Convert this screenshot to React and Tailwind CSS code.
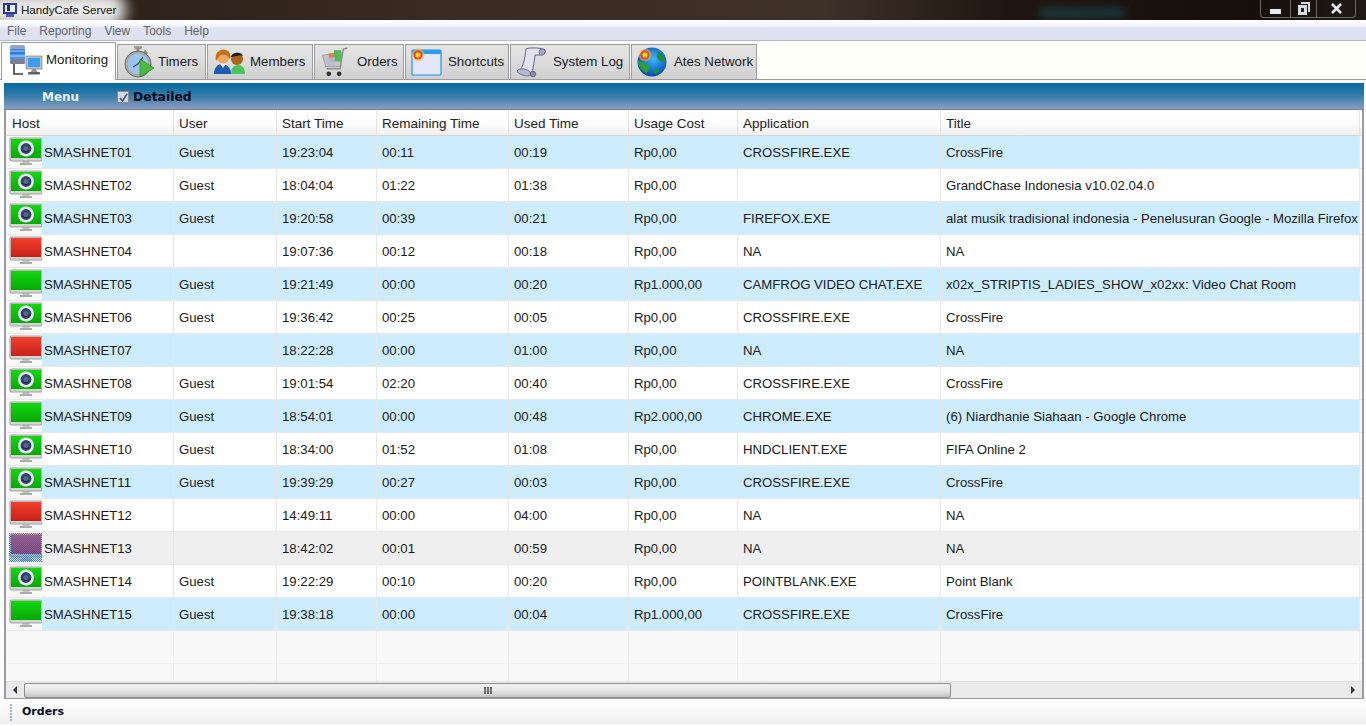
import { useId } from "react";

const rows = [
  ["SMASHNET01", "Guest", "19:23:04", "00:11", "00:19", "Rp0,00", "CROSSFIRE.EXE", "CrossFire", "cam"],
  ["SMASHNET02", "Guest", "18:04:04", "01:22", "01:38", "Rp0,00", "", "GrandChase Indonesia v10.02.04.0", "cam"],
  ["SMASHNET03", "Guest", "19:20:58", "00:39", "00:21", "Rp0,00", "FIREFOX.EXE", "alat musik tradisional indonesia - Penelusuran Google - Mozilla Firefox", "cam"],
  ["SMASHNET04", "", "19:07:36", "00:12", "00:18", "Rp0,00", "NA", "NA", "red"],
  ["SMASHNET05", "Guest", "19:21:49", "00:00", "00:20", "Rp1.000,00", "CAMFROG VIDEO CHAT.EXE", "x02x_STRIPTIS_LADIES_SHOW_x02xx: Video Chat Room", "green"],
  ["SMASHNET06", "Guest", "19:36:42", "00:25", "00:05", "Rp0,00", "CROSSFIRE.EXE", "CrossFire", "cam"],
  ["SMASHNET07", "", "18:22:28", "00:00", "01:00", "Rp0,00", "NA", "NA", "red"],
  ["SMASHNET08", "Guest", "19:01:54", "02:20", "00:40", "Rp0,00", "CROSSFIRE.EXE", "CrossFire", "cam"],
  ["SMASHNET09", "Guest", "18:54:01", "00:00", "00:48", "Rp2.000,00", "CHROME.EXE", "(6) Niardhanie Siahaan - Google Chrome", "green"],
  ["SMASHNET10", "Guest", "18:34:00", "01:52", "01:08", "Rp0,00", "HNDCLIENT.EXE", "FIFA Online 2", "cam"],
  ["SMASHNET11", "Guest", "19:39:29", "00:27", "00:03", "Rp0,00", "CROSSFIRE.EXE", "CrossFire", "cam"],
  ["SMASHNET12", "", "14:49:11", "00:00", "04:00", "Rp0,00", "NA", "NA", "red"],
  ["SMASHNET13", "", "18:42:02", "00:01", "00:59", "Rp0,00", "NA", "NA", "selected"],
  ["SMASHNET14", "Guest", "19:22:29", "00:10", "00:20", "Rp0,00", "POINTBLANK.EXE", "Point Blank", "cam"],
  ["SMASHNET15", "Guest", "19:38:18", "00:00", "00:04", "Rp1.000,00", "CROSSFIRE.EXE", "CrossFire", "green"],
];

const headers = ["Host", "User", "Start Time", "Remaining Time", "Used Time", "Usage Cost", "Application", "Title"];
const gridCols = "grid grid-cols-[167px_103px_100px_132px_120px_109px_203px_419px]";

function PcIcon({ state }) {
  const id = useId();
  const isRed = state === "red" || state === "selected";
  return (
    <svg width="34" height="30" viewBox="0 0 34 30" className="shrink-0">
      <defs>
        <linearGradient id={id} x1="0" y1="0" x2="0" y2="1">
          <stop offset="0" stopColor={isRed ? "#f2402c" : "#12d80f"} />
          <stop offset="1" stopColor={isRed ? "#c8201a" : "#07a808"} />
        </linearGradient>
        <pattern id={id + "d"} width="2" height="2" patternUnits="userSpaceOnUse">
          <rect width="1" height="1" fill="#2f7cf0" />
          <rect x="1" y="1" width="1" height="1" fill="#2f7cf0" />
        </pattern>
      </defs>
      <path d="M14 23h6l1 4h-8z" fill="#c4c8c4" />
      <rect x="11" y="26" width="12" height="2" fill="#a9aca9" />
      <rect x="1" y="1" width="32" height="23" rx="1" fill="#d2d6d2" stroke="#8d918d" strokeWidth="0.8" />
      <rect x="2" y="2" width="30" height="19" fill={`url(#${id})`} />
      {state === "cam" && (
        <g>
          <circle cx="17" cy="11.5" r="8" fill="#e9edf2" />
          <circle cx="17" cy="11.5" r="5.4" fill="#34406e" />
          <circle cx="17" cy="11.5" r="2.6" fill="#56648f" />
          <path d="M13.5 13.5q3.5 2.5 7 0" stroke="#1c2444" strokeWidth="1" fill="none" />
        </g>
      )}
      {state === "selected" && <rect x="0" y="0" width="34" height="29" fill={`url(#${id}d)`} />}
    </svg>
  );
}

function MonitoringIcon() {
  return (
    <svg width="34" height="32" viewBox="0 0 34 32">
      <path d="M5 18v12h9" stroke="#3c3c38" strokeWidth="1.6" fill="none" />
      <rect x="1" y="1" width="15" height="5" rx="2" fill="#9aa2c4" />
      <rect x="1" y="5" width="15" height="5" fill="#2c7fe0" />
      <rect x="1" y="10" width="15" height="5" fill="#4a95e8" />
      <rect x="1" y="15" width="15" height="5" rx="1" fill="#7b8198" />
      <path d="M1 7h15M1 12h15" stroke="#cfe3fa" strokeWidth="0.8" />
      <rect x="17" y="12" width="16" height="13" fill="#b8bec4" stroke="#7c8288" strokeWidth="0.7" />
      <rect x="19" y="14" width="12" height="9" fill="#3c9cf0" />
      <path d="M23 25h4l1 3h-6z" fill="#8c9298" />
      <rect x="19" y="28" width="12" height="2.5" rx="1" fill="#5c6268" />
    </svg>
  );
}

function TimerIcon() {
  return (
    <svg width="30" height="32" viewBox="0 0 30 32">
      <rect x="10" y="0" width="8" height="3" rx="1" fill="#9a9a96" />
      <rect x="12.5" y="2" width="3" height="4" fill="#8a8a86" />
      <path d="M21 4l3 3-2 2-3-3z" fill="#8a8a86" />
      <circle cx="14" cy="18" r="13" fill="#a8a8a2" stroke="#6c6c68" strokeWidth="1" />
      <circle cx="14" cy="18" r="10.5" fill="#9cc4ec" />
      <path d="M14 18l5-7M14 18l-5 3" stroke="#2c4a78" strokeWidth="1.2" />
      <path d="M16 13v18l14-9z" fill="#4cb83c" stroke="#2f8a28" strokeWidth="0.7" />
    </svg>
  );
}

function MembersIcon() {
  return (
    <svg width="32" height="26" viewBox="0 0 32 26">
      <path d="M18 25c0-6 3-9 7-9s7 3 7 9z" fill="#4cc45c" />
      <circle cx="24" cy="10" r="6" fill="#a86418" />
      <path d="M18 8c1-5 10-6 12-1-3-1-7 0-12 1z" fill="#141414" />
      <path d="M1 25c0-7 4-10 8-10s9 3 9 10z" fill="#1c5cb4" />
      <path d="M7 15l3 4 3-4z" fill="#e8f0f8" />
      <circle cx="10" cy="8" r="6.5" fill="#f0a860" />
      <path d="M3 12C1 3 8-1 13 1c5 2 5 7 4 9-2-4-5-5-9-4-2 1-3 3-5 6z" fill="#c4701c" />
    </svg>
  );
}

function CartIcon() {
  return (
    <svg width="30" height="33" viewBox="0 0 26 32">
      <path d="M25 2l-4 1-3 19H5" stroke="#8e8e8e" strokeWidth="1.4" fill="none" />
      <path d="M1 9l19-3-2 14H4z" fill="#c6c8cc" stroke="#85878a" strokeWidth="0.7" />
      <rect x="7" y="7" width="6" height="8" fill="#e87c48" />
      <rect x="12" y="4" width="7" height="11" fill="#58b858" />
      <rect x="5" y="11" width="8" height="8" fill="#b4bcd4" opacity="0.8" />
      <circle cx="7" cy="27" r="2.3" fill="#333" />
      <circle cx="17" cy="27" r="2.3" fill="#333" />
    </svg>
  );
}

function Spark() {
  return (
    <g>
      <circle cx="7" cy="7" r="6.5" fill="#f8b060" opacity="0.55" />
      <circle cx="7" cy="7" r="4.5" fill="#e84c1c" />
      <circle cx="7" cy="7" r="2.5" fill="#ffd820" />
    </g>
  );
}

function ShortcutsIcon() {
  return (
    <svg width="32" height="28" viewBox="0 0 32 28">
      <rect x="1" y="2" width="29" height="25" rx="1" fill="#e4e6fa" stroke="#1c98f0" strokeWidth="1.2" />
      <rect x="1" y="2" width="29" height="4" fill="#2c9cf0" />
      <Spark />
    </svg>
  );
}

function ScrollIcon() {
  return (
    <svg width="32" height="32" viewBox="0 0 32 32">
      <path d="M10 3c4-2 17-1 19 1 1 2-1 4-3 5l-7 0c-1 8-2 15-4 19-6 0-11-1-12-2 4-5 6-14 7-23z" fill="#e2e2f0" stroke="#64648c" strokeWidth="1" />
      <circle cx="26" cy="6" r="3" fill="#a8a8c4" stroke="#64648c" strokeWidth="0.8" />
      <path d="M1 25c2-3 9-3 13 1 1 2 0 4-2 4-4 0-10-2-11-5z" fill="#b8b8d0" stroke="#64648c" strokeWidth="0.9" />
      <circle cx="17" cy="28" r="2.8" fill="#8c8cac" stroke="#585880" strokeWidth="0.8" />
    </svg>
  );
}

function GlobeIcon() {
  const id = useId();
  return (
    <svg width="30" height="30" viewBox="0 0 30 30">
      <defs>
        <radialGradient id={id} cx="0.55" cy="0.4" r="0.65">
          <stop offset="0" stopColor="#3cb8f0" />
          <stop offset="0.75" stopColor="#1060c0" />
          <stop offset="1" stopColor="#0c3c8c" />
        </radialGradient>
      </defs>
      <circle cx="15" cy="15" r="14.5" fill={`url(#${id})`} />
      <path d="M1 14c4 1 7 1 10 4 2 2 1 5-1 8C5 24 1 20 1 14z" fill="#2c9c3c" />
      <path d="M22 5c3 1 6 5 6 9-2 2-3 1-5 0s-3-3-3-5 1-3 2-4z" fill="#1c8c48" />
      <path d="M17 23c2-1 4-1 5 0s-1 3-3 4c-2 0-3-3-2-4z" fill="#1c8c48" />
      <g transform="translate(1 1)">
        <Spark />
      </g>
    </svg>
  );
}

const tabs = [
  ["Timers", <TimerIcon />, "w-[89px] pl-[6px] gap-[4px]"],
  ["Members", <MembersIcon />, "w-[106px] pl-[5px] gap-[5px]"],
  ["Orders", <CartIcon />, "w-[90px] pl-[5px] gap-[7px]"],
  ["Shortcuts", <ShortcutsIcon />, "w-[104px] pl-[5px] gap-[5px]"],
  ["System Log", <ScrollIcon />, "w-[120px] pl-[5px] gap-[5px]"],
  ["Ates Network", <GlobeIcon />, "w-[126px] pl-[5px] gap-[7px]"],
];

function TitleBar() {
  return (
    <div className="relative h-[20px] flex items-center justify-between bg-[linear-gradient(90deg,#2a1e17_0%,#3a2c22_35%,#3e3128_60%,#201611_74%,#150e0b_92%,#201a17_100%)] overflow-hidden">
      <div className="absolute left-[-14px] top-[-8px] w-[140px] h-[36px] rounded-full bg-white/90 blur-[7px]" />
      <div className="absolute left-[1040px] top-[8px] w-[85px] h-[10px] bg-[#1c5e6c]/50 blur-[4px]" />
      <div className="relative flex items-center gap-[3px] pl-[2px]">
        <svg width="16" height="16" viewBox="0 0 16 16">
          <rect x="1" y="1" width="14" height="11" fill="#2c3c9c" />
          <rect x="3" y="3" width="10" height="7" fill="#e8f0fc" />
          <rect x="5" y="3" width="3" height="6" fill="#1c2c7c" />
          <rect x="4" y="12" width="8" height="3" fill="#4c5cac" />
        </svg>
        <span className="text-[11.6px] leading-none text-[#111]">HandyCafe Server</span>
      </div>
      <div className="relative mr-[10px] flex h-[18px] self-start border border-t-0 border-[#6e6a66] rounded-b-[4px] text-white">
        <div className="w-[29px] flex items-center justify-center pt-[2px]">
          <div className="w-[11px] h-[5px] bg-[#e8ecef] mt-[4px]" />
        </div>
        <div className="w-[27px] border-x border-[#6e6a66] flex items-center justify-center">
          <svg width="12" height="13" viewBox="0 0 12 13">
            <path d="M3 0h9v10h-2V2H3z" fill="#d8dce0" />
            <path d="M0 3h9v10H0z" fill="#d8dce0" />
            <rect x="3" y="6" width="3" height="4" fill="#2a2420" />
          </svg>
        </div>
        <div className="w-[38px] flex items-center justify-center">
          <svg width="11" height="11" viewBox="0 0 11 11">
            <path d="M1 1l9 9M10 1l-9 9" stroke="#e8ecef" strokeWidth="2.6" />
          </svg>
        </div>
      </div>
    </div>
  );
}

function MenuBar() {
  return (
    <div className="h-[20px] mt-[1px] border-t border-white flex items-center gap-[13px] pl-[7px] text-[12px] text-[#62646e] bg-[linear-gradient(180deg,#fbfbfd_0%,#f4f5fa_20%,#dfe3f1_35%,#dee2f0_100%)] border-b border-b-[#b4b9d2]">
      {["File", "Reporting", "View", "Tools", "Help"].map((m) => (
        <span key={m}>{m}</span>
      ))}
    </div>
  );
}

function TabStrip() {
  return (
    <div className="h-[39px] flex items-end pl-[1px] text-[13.3px] text-[#1a1a1a] bg-[#fffff9] gap-[1px] border-b border-[#9a9aa0]">
      <div className="relative z-10 w-[115px] h-[38px] -mb-[1px] flex items-center gap-[3px] pl-[7px] pb-[3px] bg-white border border-b-0 border-[#9a9aa0]">
        <MonitoringIcon />
        <span>Monitoring</span>
      </div>
      {tabs.map(([label, icon, cls]) => (
        <div
          key={label}
          className={`h-[35px] flex items-center border border-b-0 border-[#9c9ca0] bg-[linear-gradient(180deg,#e4e4e4_0%,#dcdcdc_50%,#cfcfcf_100%)] ${cls}`}
        >
          {icon}
          <span>{label}</span>
        </div>
      ))}
    </div>
  );
}

function HostRow({ row, index }) {
  const selected = row[8] === "selected";
  const odd = index % 2 === 0;
  const bg = selected ? "bg-[#efefef]" : odd ? "bg-[#cdecfe]" : "bg-white";
  return (
    <div className={`${gridCols} h-[33px] border-b border-[#e8e8e8] text-[13.2px] text-[#1a1a1a]`}>
      <div className="flex items-center bg-[#f8f8f8] border-r border-[#e8e8e8]">
        <div className="w-[35px] flex pl-[2px] shrink-0 self-start pt-[1px]">
          <PcIcon state={row[8]} />
        </div>
        <div className={`flex-1 h-full flex items-center pl-[2px] pt-[1px] ${bg}`}>{row[0]}</div>
      </div>
      {row.slice(1, 8).map((cell, i) => (
        <div
          key={i}
          className={`flex items-center pl-[5px] pt-[1px] whitespace-nowrap overflow-hidden ${bg} ${selected ? "" : "border-r border-[#e8e8e8]"}`}
        >
          {cell}
        </div>
      ))}
    </div>
  );
}

function EmptyRow({ height }) {
  return (
    <div className={`${gridCols} ${height} border-b border-[#efefef]`}>
      {headers.map((h) => (
        <div key={h} className="border-r border-[#efefef]" />
      ))}
    </div>
  );
}

function ScrollBar() {
  return (
    <div className="h-[17px] flex items-center bg-[#ebebeb] border-t border-[#e0e0e0]">
      <div className="w-[18px] flex justify-center">
        <div className="w-0 h-0 border-y-[4px] border-y-transparent border-r-[4px] border-r-[#333]" />
      </div>
      <div className="w-[927px] h-[15px] flex items-center justify-center gap-[1px] rounded-[2px] border border-[#8e8e8e] bg-[linear-gradient(180deg,#f2f2f2_0%,#e6e6e6_50%,#c4c4c4_100%)]">
        <div className="w-[2px] h-[7px] bg-[#6a6a6a]" />
        <div className="w-[2px] h-[7px] bg-[#6a6a6a]" />
        <div className="w-[2px] h-[7px] bg-[#6a6a6a]" />
      </div>
      <div className="flex-1 flex justify-end pr-[7px]">
        <div className="w-0 h-0 border-y-[4px] border-y-transparent border-l-[4px] border-l-[#333]" />
      </div>
    </div>
  );
}

export default function App() {
  return (
    <div className="w-[1366px] h-[726px] overflow-hidden flex flex-col bg-white font-['Liberation_Sans',sans-serif]">
      <TitleBar />
      <MenuBar />
      <TabStrip />
      <div className="ml-[4px] w-[1360px] pt-[3px]">
        <div className="h-[27px] flex items-center pt-[2px] bg-[linear-gradient(180deg,#07699f_0%,#2f7aa9_45%,#8b9cc2_100%)] border-b border-[#77808f] font-['DejaVu_Sans',sans-serif] font-bold text-[12px]">
          <span className="ml-[38px] w-[75px] text-[#e8f0f8]">Menu</span>
          <div className="w-[12px] h-[12px] bg-[#d6d6d6] border border-[#8a8a8a] flex items-center justify-center">
            <svg width="9" height="9" viewBox="0 0 9 9">
              <path d="M1 5l2.5 3L8 1" stroke="#3c4a9c" strokeWidth="1.5" fill="none" />
            </svg>
          </div>
          <span className="ml-[4px] text-[#050a14] text-[12.4px]">Detailed</span>
        </div>
        <div className="border-x-2 border-b border-[#9a9aa4] bg-[#f8f8f8] h-[589px] flex flex-col">
          <div className="pl-[1px] flex-1 overflow-hidden">
            <div className={`${gridCols} h-[26px] text-[13.5px] text-[#222] border-b border-[#d8d8d8] bg-[linear-gradient(180deg,#ffffff_0%,#fdfdfd_50%,#efefef_100%)]`}>
              {headers.map((h) => (
                <div key={h} className="flex items-center pl-[5px] pt-[3px] border-r border-[#e4e4e4]">
                  {h}
                </div>
              ))}
            </div>
            {rows.map((row, i) => (
              <HostRow key={row[0]} row={row} index={i} />
            ))}
            <EmptyRow height="h-[33px]" />
            <div className={`${gridCols} h-[17px]`}>
              {headers.map((h) => (
                <div key={h} className="border-r border-[#efefef]" />
              ))}
            </div>
          </div>
          <ScrollBar />
        </div>
      </div>
      <div className="h-[25px] flex items-center pl-[10px] pt-[1px] gap-[10px] bg-[linear-gradient(180deg,#ffffff_0%,#fafafa_40%,#eeeeee_100%)]">
        <div className="flex flex-col gap-[1px]">
          {[0, 1, 2, 3, 4, 5].map((d) => (
            <div key={d} className="w-[2px] h-[2px] bg-[#a4aedc]" />
          ))}
        </div>
        <span className="font-['DejaVu_Sans',sans-serif] font-bold text-[11px] text-[#0a0f1e]">Orders</span>
      </div>
    </div>
  );
}
